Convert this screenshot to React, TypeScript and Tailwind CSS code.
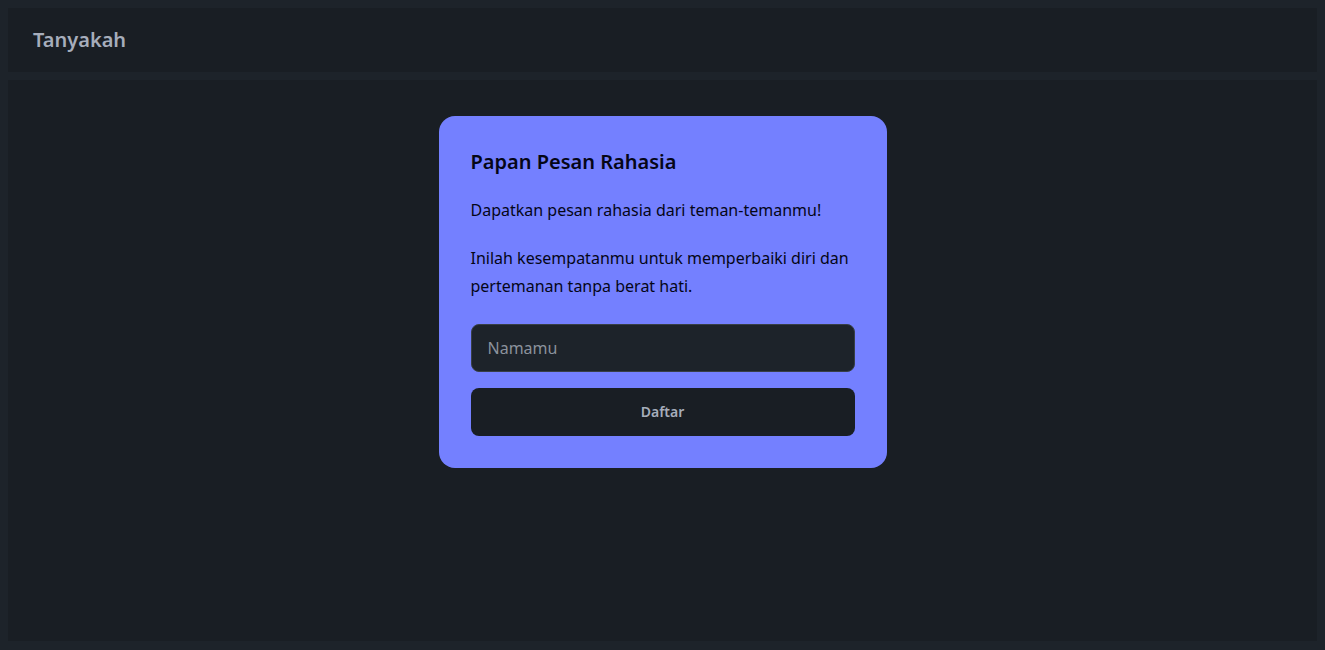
export default function App() {
  return (
    <div
      className="min-h-screen bg-[#1d232a] p-2 flex flex-col gap-2"
      style={{ fontFamily: '"Noto Sans", "Open Sans", sans-serif' }}
    >
      <header className="h-16 bg-[#191e24] flex items-center pl-[25px] pr-6">
        <span className="text-xl font-semibold text-[#a6adbb]">Tanyakah</span>
      </header>

      <main className="h-[561px] bg-[#191e24] flex justify-center pt-9">
        <div className="w-[448px] h-fit bg-[#7480ff] rounded-2xl p-8 text-[#050617]">
          <h1 className="text-xl leading-7 font-semibold">Papan Pesan Rahasia</h1>
          <p className="mt-5 text-base leading-7">
            Dapatkan pesan rahasia dari teman-temanmu!
          </p>
          <p className="mt-5 text-base leading-7">
            Inilah kesempatanmu untuk memperbaiki diri dan pertemanan tanpa
            berat hati.
          </p>
          <input
            type="text"
            placeholder="Namamu"
            className="mt-6 w-full h-12 rounded-lg bg-[#1d232a] border border-[#383f47] px-4 text-base text-[#a6adbb] placeholder:text-[#8b929c] outline-none"
          />
          <button className="mt-4 w-full h-12 rounded-lg bg-[#191e24] text-sm font-semibold text-[#a6adbb]">
            Daftar
          </button>
        </div>
      </main>
    </div>
  );
}
